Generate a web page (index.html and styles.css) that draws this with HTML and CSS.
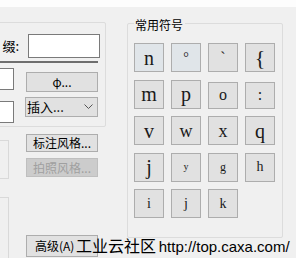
FILE: index.html
```html
<!DOCTYPE html>
<html lang="zh-CN">
<head>
  <meta charset="UTF-8">
  <title>符号</title>
  <link rel="stylesheet" href="styles.css">
</head>
<body>

<div class="topbar"></div>

<div class="dialog">
  <div class="left-col">
    <div class="prefix-group">
      <div class="prefix-row">
        <span class="prefix-label">缀:</span>
        <span class="textbox prefix-box"></span>
      </div>
      <div class="rule"></div>
      <div class="field-row">
        <div class="stub-inputs">
          <span class="textbox stub-input"></span>
          <span class="textbox stub-input"></span>
        </div>
        <div class="field-actions">
          <button class="btn phi-btn">φ...</button>
          <div class="combo">
            <span>插入...</span>
            <svg class="chevron" width="9" height="6" viewBox="0 0 9 6"><polyline points="0.5,0.5 4.5,4.5 8.5,0.5" fill="none" stroke="#555" stroke-width="1"/></svg>
          </div>
        </div>
      </div>
    </div>

    <div class="lower">
      <div class="stubs">
        <div class="stub-box box-a"></div>
        <div class="stub-box box-b"></div>
      </div>
      <div class="style-btns">
        <button class="btn style-btn">标注风格...</button>
        <button class="btn style-btn" disabled>拍照风格...</button>
        <button class="btn adv-btn">高级(A)</button>
      </div>
    </div>
  </div>

  <div class="sym-group">
    <div class="group-title">常用符号</div>
    <div class="sym-grid">
      <button class="sym hot s20">n</button>
      <button class="sym hot s14">°</button>
      <button class="sym s16">`</button>
      <button class="sym s22">{</button>

      <button class="sym s20">m</button>
      <button class="sym s20">p</button>
      <button class="sym s16 low">o</button>
      <button class="sym s16 low">:</button>

      <button class="sym s20">v</button>
      <button class="sym s18">w</button>
      <button class="sym s18">x</button>
      <button class="sym s20">q</button>

      <button class="sym s20">j</button>
      <button class="sym s10">y</button>
      <button class="sym s12">g</button>
      <button class="sym s14">h</button>

      <button class="sym s14">i</button>
      <button class="sym s14">j</button>
      <button class="sym s14">k</button>
    </div>
  </div>
</div>

<div class="watermark"><span class="wm-cn">工业云社区</span> <span class="wm-url">http://top.caxa.com/</span></div>

</body>
</html>
```

FILE: styles.css
```css
body {
  margin: 0;
  width: 296px;
  height: 258px;
  overflow: hidden;
  position: relative;
  background-color: #f0f0f0;
  font-family: "Noto Sans CJK SC", "Liberation Sans", sans-serif;
  font-size: 12px;
  color: #000;
}

.topbar {
  height: 7px;
  background-color: #fdfdfd;
}

.dialog {
  display: flex;
  align-items: flex-start;
}

/* left column, clipped by the window edge */
.left-col {
  width: 127px;
  padding-top: 15px;
}

.prefix-group {
  box-sizing: border-box;
  margin-left: -10px;
  width: 116px;
  height: 105px;
  border: 1px solid #dcdcdc;
  border-radius: 2px;
  padding: 11px 5px 0 0;
}

.textbox {
  display: block;
  box-sizing: border-box;
  background-color: #fff;
  border: 1px solid #7a7a7a;
}

.prefix-row {
  display: flex;
  justify-content: flex-end;
  align-items: center;
}

.prefix-label {
  flex-shrink: 0;
  white-space: nowrap;
  font-size: 13px;
  margin-right: 9px;
  line-height: 16px;
}

.prefix-box {
  flex-shrink: 0;
  width: 72px;
  height: 24px;
}

.rule {
  margin-top: 3px;
  width: 107px;
  height: 2px;
  background-color: #6e6e6e;
}

.field-row {
  display: flex;
  margin-top: 5px;
}

.stub-inputs {
  display: flex;
  flex-direction: column;
  gap: 11px;
  width: 23px;
}

.stub-input {
  height: 22px;
}

.field-actions {
  display: flex;
  flex-direction: column;
  gap: 5px;
  margin: 4px 0 0 11px;
  width: 73px;
}

.btn {
  box-sizing: border-box;
  padding: 0;
  background-color: #e1e1e1;
  border: 1px solid #adadad;
  font-family: "Noto Sans CJK SC", "Liberation Sans", sans-serif;
  font-size: 12px;
  color: #000;
  line-height: 16px;
}

.phi-btn {
  margin-left: 1px;
  width: 72px;
  height: 20px;
}

.combo {
  box-sizing: border-box;
  display: flex;
  align-items: center;
  justify-content: space-between;
  height: 20px;
  padding: 0 4px 0 1px;
  background-color: #e1e1e1;
  border: 1px solid #adadad;
  font-size: 13px;
  line-height: 16px;
}

.chevron {
  display: block;
}

.lower {
  display: flex;
}

.stubs {
  width: 9px;
}

.stub-box {
  box-sizing: border-box;
  border: 1px solid #d9d9d9;
  border-left: none;
}

.box-a {
  margin-top: 13px;
  height: 39px;
}

.box-b {
  margin-top: 18px;
  height: 70px;
}

.style-btns {
  display: flex;
  flex-direction: column;
  margin: 7px 0 0 17px;
  width: 72px;
}

.style-btn {
  height: 18px;
}

.style-btn + .style-btn {
  margin-top: 6px;
  height: 19px;
}

.style-btn:disabled {
  background-color: #cccccc;
  border-color: #bfbfbf;
  color: #a0a0a0;
}

.adv-btn {
  margin-top: 58px;
  height: 22px;
  text-align: left;
  padding-left: 8px;
}

/* common symbols */
.sym-group {
  box-sizing: border-box;
  margin-top: 16px;
  width: 156px;
  height: 215px;
  border: 1px solid #dcdcdc;
  border-radius: 2px;
  padding-left: 6px;
}

.group-title {
  width: fit-content;
  margin: -7px 0 0 0;
  padding: 0 2px 0 1px;
  background-color: #f0f0f0;
  line-height: 16px;
}

.sym-grid {
  display: grid;
  grid-template-columns: repeat(4, 30px);
  grid-auto-rows: 29px;
  column-gap: 7px;
  row-gap: 7.5px;
  margin-top: 10px;
}

.sym {
  box-sizing: border-box;
  padding: 0;
  display: flex;
  align-items: center;
  justify-content: center;
  background-color: #e1e1e1;
  border: 1px solid #adadad;
  font-family: "Liberation Serif", "DejaVu Serif", serif;
  color: #1a1a1a;
  line-height: 1;
}

.sym.hot {
  background-color: #e0e5e9;
}

.sym.low {
  margin-top: 2px;
}

.s10 { font-size: 10px; }
.s12 { font-size: 12px; }
.s14 { font-size: 14px; }
.s16 { font-size: 16px; }
.s18 { font-size: 18px; }
.s20 { font-size: 20px; }
.s22 { font-size: 22px; }

/* watermark over the bottom of the dialog */
.watermark {
  position: absolute;
  left: 76px;
  top: 235px;
  white-space: nowrap;
  line-height: 20px;
  color: #000;
}

.wm-cn {
  font-family: "Noto Sans CJK SC", sans-serif;
  font-size: 16px;
}

.wm-url {
  font-family: "Liberation Sans", sans-serif;
  font-size: 15px;
}
```
